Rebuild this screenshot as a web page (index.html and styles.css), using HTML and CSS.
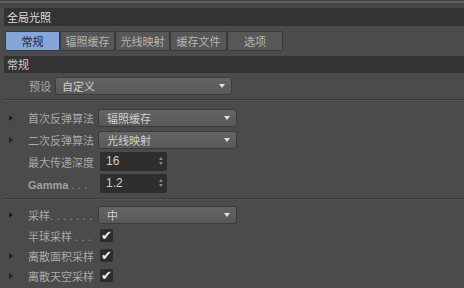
FILE: index.html
```html
<!DOCTYPE html>
<html lang="zh-CN">
<head>
    <meta charset="UTF-8">
    <title>全局光照</title>
    <link rel="stylesheet" href="styles.css">
</head>
<body>
    <div class="topline"></div>
    <div class="panel-title">全局光照</div>
    <div class="tabs">
        <div class="tab active">常规</div>
        <div class="tab">辐照缓存</div>
        <div class="tab">光线映射</div>
        <div class="tab wide">缓存文件</div>
        <div class="tab">选项</div>
    </div>
    <div class="section">常规</div>

    <div class="preset-row">
        <span class="preset-label">预设</span>
        <div class="dropdown preset">自定义<span class="arrow"></span></div>
    </div>
    <div class="sep"></div>

    <div class="group">
        <div class="row">
            <span class="tri"></span><span class="label">首次反弹算法</span>
            <div class="dropdown">辐照缓存<span class="arrow"></span></div>
        </div>
        <div class="row">
            <span class="tri"></span><span class="label">二次反弹算法</span>
            <div class="dropdown">光线映射<span class="arrow"></span></div>
        </div>
        <div class="row">
            <span class="tri none"></span><span class="label">最大传递深度</span>
            <div class="number">16<span class="spin"></span></div>
        </div>
        <div class="row">
            <span class="tri none"></span><span class="label"><b>Gamma</b><span class="dots"> . . .</span></span>
            <div class="number">1.2<span class="spin"></span></div>
        </div>
    </div>
    <div class="sep"></div>

    <div class="group sampling">
        <div class="row">
            <span class="tri"></span><span class="label">采样<span class="dots">. . . . . . .</span></span>
            <div class="dropdown">中<span class="arrow"></span></div>
        </div>
        <div class="row check-row">
            <span class="tri none"></span><span class="label">半球采样<span class="dots"> . . .</span></span>
            <div class="check">&#10004;</div>
        </div>
        <div class="row check-row">
            <span class="tri"></span><span class="label">离散面积采样</span>
            <div class="check">&#10004;</div>
        </div>
        <div class="row check-row">
            <span class="tri"></span><span class="label">离散天空采样</span>
            <div class="check">&#10004;</div>
        </div>
    </div>
</body>
</html>
```

FILE: styles.css
```css
body {
    margin: 0;
    background-color: #4b4b4b;
    color: #a9a9a9;
    font-family: "Noto Sans CJK SC", "Liberation Sans", sans-serif;
    font-size: 11px;
    width: 464px;
    height: 288px;
    overflow: hidden;
}
.topline {
    height: 8px;
    border-top: 1px solid #444;
    box-sizing: border-box;
    background: linear-gradient(#606060 0, #606060 2px, #474747 2px);
}
.panel-title {
    margin-left: 4px;
    height: 18px;
    line-height: 18px;
    padding-left: 3px;
    background-color: #333;
    color: #dcdcdc;
}
.tabs {
    display: flex;
    padding: 5px 0 0 5px;
    height: 20px;
}
.tab {
    width: 55px;
    height: 20px;
    box-sizing: border-box;
    border: 1px solid #3a3a3a;
    border-radius: 2px;
    background-color: #575757;
    color: #b4b4b4;
    text-align: center;
    line-height: 18px;
}
.tab.wide {
    width: 57px;
}
.tab:last-child {
    width: 56px;
}
.tab.active {
    background-color: #86a5d8;
    color: #1d2535;
}
.section {
    margin: 5px 0 0 4px;
    height: 17px;
    line-height: 17px;
    padding-left: 3px;
    background-color: #333;
    color: #d0d0d0;
}
.preset-row {
    display: flex;
    align-items: center;
    height: 17px;
    margin-top: 4px;
}
.preset-label {
    width: 51px;
    text-align: right;
    margin-right: 4px;
}
.dropdown {
    position: relative;
    width: 139px;
    height: 18px;
    box-sizing: border-box;
    border: 1px solid #3c3c3c;
    border-radius: 3px;
    background: linear-gradient(#646464, #585858);
    color: #cfcfcf;
    line-height: 16px;
    padding-left: 8px;
}
.dropdown.preset {
    width: 177px;
    padding-left: 6px;
}
.arrow {
    position: absolute;
    right: 6px;
    top: 6px;
    border-left: 3px solid transparent;
    border-right: 3px solid transparent;
    border-top: 4px solid #e0e0e0;
}
.sep {
    margin: 5px 0 0 4px;
    height: 1px;
    background-color: #3a3a3a;
    border-bottom: 1px solid #555;
}
.group {
    padding-top: 7px;
}
.group.sampling {
    padding-top: 5px;
}
.row {
    display: flex;
    align-items: center;
    height: 19px;
    margin-bottom: 3px;
}
.row.check-row {
    height: 17px;
}
.tri {
    width: 0;
    height: 0;
    margin-left: 9px;
    margin-right: 15px;
    border-top: 3px solid transparent;
    border-bottom: 3px solid transparent;
    border-left: 4px solid #222;
}
.tri.none {
    border-left-color: transparent;
}
.label {
    width: 70px;
    white-space: nowrap;
    overflow: hidden;
}
.label b {
    font-family: "Liberation Sans", sans-serif;
    font-weight: bold;
    color: #a0a0a0;
}
.dots {
    color: #8a8a8a;
    letter-spacing: 0.5px;
}
.number {
    position: relative;
    margin-left: 2px;
    width: 67px;
    height: 19px;
    box-sizing: border-box;
    border-radius: 2px;
    background-color: #2e2e2e;
    color: #cfcfcf;
    font-family: "Liberation Sans", sans-serif;
    font-size: 12px;
    line-height: 19px;
    padding-left: 6px;
}
.spin {
    position: absolute;
    right: 4px;
    top: 5px;
    width: 0;
    height: 0;
    border-left: 2px solid transparent;
    border-right: 2px solid transparent;
    border-bottom: 3px solid #888;
}
.spin::after {
    content: "";
    position: absolute;
    left: -2px;
    top: 5px;
    border-left: 2px solid transparent;
    border-right: 2px solid transparent;
    border-top: 3px solid #888;
}
.check {
    margin-left: 2px;
    width: 13px;
    height: 13px;
    border-radius: 2px;
    background-color: #2c2c2c;
    color: #f0f0f0;
    font-family: "DejaVu Sans", sans-serif;
    font-size: 13px;
    line-height: 13px;
    text-align: center;
    overflow: hidden;
}
```
